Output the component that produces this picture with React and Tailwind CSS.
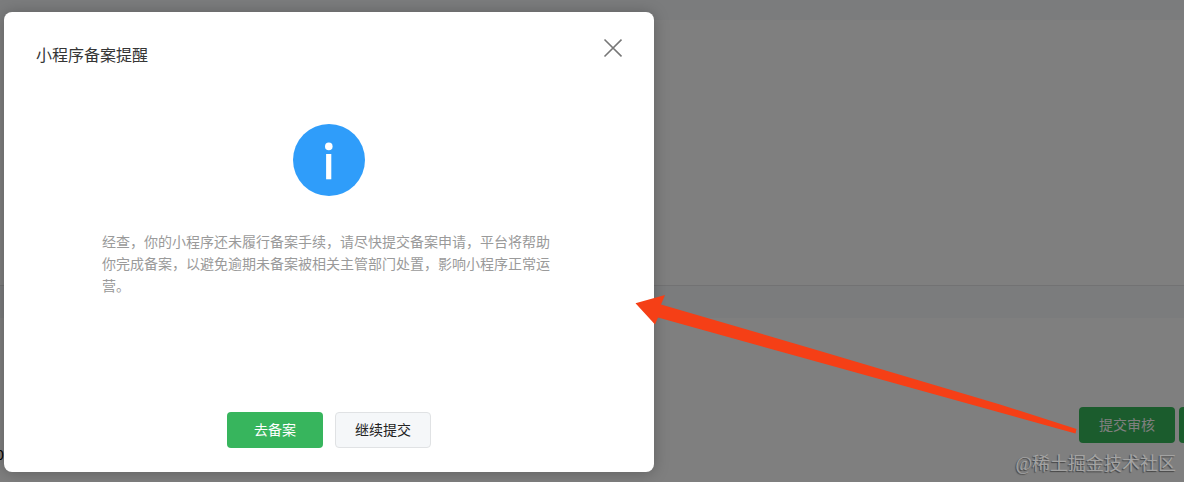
import React from "react";

function ReviewPage() {
  return (
    <main className="flex min-h-screen flex-col bg-white">
      <div className="h-5 bg-[#f6f8fb]" />
      <section className="h-[266px] border-b border-[#e4e5e7]" />
      <div className="h-8 bg-[#f6f8fb]" />
      <section className="flex grow flex-col">
        <div className="mt-[89px] flex justify-end gap-1 overflow-hidden">
          <button type="button" className="h-9 w-24 shrink-0 rounded bg-[#37b85a] text-sm text-white">
            提交审核
          </button>
          <button type="button" aria-label="更多" className="h-9 w-[5px] shrink-0 rounded-l bg-[#37b85a]" />
        </div>
        <div className="-ml-1 h-6 text-sm leading-6 text-black">0</div>
      </section>
    </main>
  );
}

function FilingDialog() {
  return (
    <section
      role="dialog"
      aria-modal="true"
      aria-labelledby="filing-title"
      className="flex w-[650px] max-w-full flex-col rounded-lg bg-white pb-6 shadow-[0_1px_15px_rgba(0,0,0,0.25)]"
    >
      <header className="flex items-start justify-between px-8 pt-6">
        <h2 id="filing-title" className="pt-2 text-base leading-6 text-[#353535]">
          小程序备案提醒
        </h2>
        <button type="button" aria-label="关闭" className="mt-0.5">
          <svg className="block h-5 w-5" viewBox="0 0 20 20" fill="none" stroke="#777" strokeWidth="1.6">
            <path d="M2.500 1.500 19.500 18.500M19.500 1.500 2.500 18.500" />
          </svg>
        </button>
      </header>
      <div className="flex flex-col items-center pt-14">
        <svg className="block h-[72px] w-[72px]" viewBox="0 0 72 72" aria-hidden="true">
          <circle cx="36" cy="36" r="36" fill="#2f9dfa" />
          <circle cx="35.8" cy="22.4" r="3.8" fill="#fff" />
          <path d="M33.1 30h5.2v25.3h-5.200z" fill="#fff" />
        </svg>
        <p className="mt-[35px] w-[454px] text-sm leading-[22px] text-[#9a9a9a]">
          经查，你的小程序还未履行备案手续，请尽快提交备案申请，平台将帮助你完成备案，以避免逾期未备案被相关主管部门处置，影响小程序正常运营。
        </p>
      </div>
      <footer className="mt-[115px] flex justify-center gap-3">
        <button type="button" className="h-9 w-24 rounded bg-[#37b55d] text-sm text-white">
          去备案
        </button>
        <button type="button" className="h-9 w-24 rounded border border-[#e0e2e4] bg-[#f5f7f9] text-sm text-[#222]">
          继续提交
        </button>
      </footer>
    </section>
  );
}

export default function App() {
  return (
    <div className="relative overflow-hidden font-['Liberation_Sans','Noto_Sans_CJK_SC',sans-serif]">
      <ReviewPage />
      <div className="absolute inset-0 bg-black/50 pl-1 pt-3">
        <FilingDialog />
      </div>
      <svg
        className="pointer-events-none absolute left-[635px] top-[294px] h-[142px] w-[442px]"
        viewBox="635 294 442 142"
        aria-hidden="true"
      >
        <path
          d="M635.5 303.3 665 295 661 304.500 820 351 1000 404.500 1076.500 429 1075.500 433.500 1000 412.500 800 357 658 317.500 655 324.500Z"
          fill="#f53f16"
        />
      </svg>
      <div className="pointer-events-none absolute bottom-1 right-2 font-['Liberation_Serif','Noto_Sans_CJK_SC',serif] text-lg leading-7 text-[#a3a3a3] [text-shadow:-1px_1px_1px_#444]">
        @稀土掘金技术社区
      </div>
    </div>
  );
}
